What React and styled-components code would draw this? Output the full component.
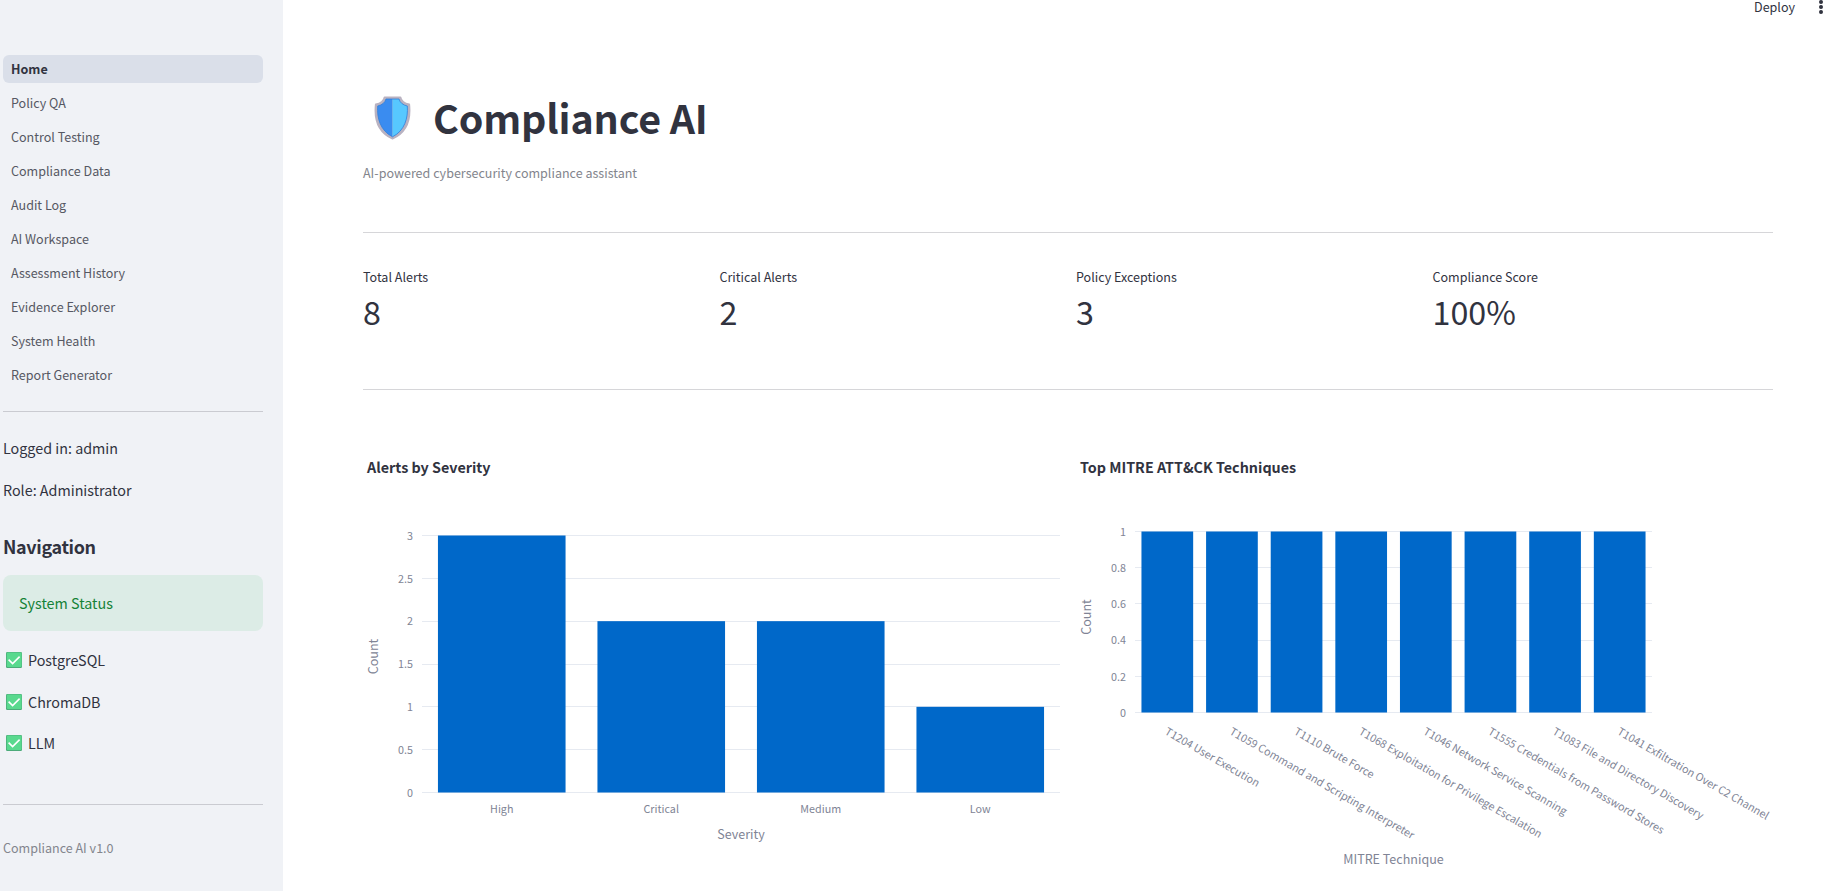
import React from 'react'
import styled, { createGlobalStyle } from 'styled-components'

const navItems = [
  'Home',
  'Policy QA',
  'Control Testing',
  'Compliance Data',
  'Audit Log',
  'AI Workspace',
  'Assessment History',
  'Evidence Explorer',
  'System Health',
  'Report Generator',
]

const services = ['PostgreSQL', 'ChromaDB', 'LLM']

const metrics = [
  { label: 'Total Alerts', value: '8' },
  { label: 'Critical Alerts', value: '2' },
  { label: 'Policy Exceptions', value: '3' },
  { label: 'Compliance Score', value: '100%' },
]

const severity = {
  bars: [
    { name: 'High', count: 3 },
    { name: 'Critical', count: 2 },
    { name: 'Medium', count: 2 },
    { name: 'Low', count: 1 },
  ],
  ticks: [0, 0.5, 1, 1.5, 2, 2.5, 3],
  plot: { left: 59, right: 697, top: 45.5, bottom: 302.5 },
  xTitle: { text: 'Severity', y: 349 },
  yTitle: { text: 'Count', y: 166.5 },
}

const techniques = {
  bars: [
    { name: 'T1204 User Execution', count: 1 },
    { name: 'T1059 Command and Scripting Interpreter', count: 1 },
    { name: 'T1110 Brute Force', count: 1 },
    { name: 'T1068 Exploitation for Privilege Escalation', count: 1 },
    { name: 'T1046 Network Service Scanning', count: 1 },
    { name: 'T1555 Credentials from Password Stores', count: 1 },
    { name: 'T1083 File and Directory Discovery', count: 1 },
    { name: 'T1041 Exfiltration Over C2 Channel', count: 1 },
  ],
  ticks: [0, 0.2, 0.4, 0.6, 0.8, 1],
  plot: { left: 59, right: 576, top: 41.5, bottom: 222.5 },
  xTitle: { text: 'MITRE Technique', y: 374 },
  yTitle: { text: 'Count', y: 127 },
  rotated: true,
}

const CheckIcon = () => (
  <svg width="16" height="16" viewBox="0 0 16 16">
    <rect width="16" height="16" rx="1.2" fill="#4cab7a" />
    <rect x="0.8" y="0.4" width="14.8" height="14.6" rx="1" fill="#59d98e" />
    <path d="M2.6 7.6 L6.6 11.6 L13.6 4.6" fill="none" stroke="#fff" strokeWidth="1.6" />
  </svg>
)

const ShieldIcon = () => (
  <svg width="37" height="44" viewBox="0 0 37 44">
    <path
      d="M10.5 1.2 H26.5 C27.2 5.2 30.2 7.6 35.3 8.4 C36.8 22.5 33 36.5 18.5 42.8 C4 36.5 0.2 22.5 1.7 8.4 C6.8 7.6 9.8 5.2 10.5 1.2 Z"
      fill="#b9b2c1"
      stroke="#b9b2c1"
      strokeWidth="1.6"
      strokeLinejoin="round"
    />
    <path d="M18.5 3 H12 C11 6.6 8.2 9 3.7 10 C2.8 22 6.2 34.6 18.5 40.8 Z" fill="#3a8cf0" />
    <path d="M18.5 3 H25 C26 6.6 28.8 9 33.3 10 C34.2 22 30.8 34.6 18.5 40.8 Z" fill="#57c8ff" />
    <path
      d="M12 3 H25 C26 6.6 28.8 9 33.3 10 C34.2 22 30.8 34.6 18.5 40.8 C6.2 34.6 2.8 22 3.7 10 C8.2 9 11 6.6 12 3 Z"
      fill="none"
      stroke="#2f7fdc"
      strokeWidth="0.8"
    />
  </svg>
)

const BarChart = ({ data, width, height }) => {
  const { bars, ticks, plot, xTitle, yTitle, rotated } = data
  const max = ticks[ticks.length - 1]
  const band = (plot.right - plot.left) / bars.length
  const barWidth = band * 0.8
  const y = (v) => plot.bottom - (v / max) * (plot.bottom - plot.top)
  const midX = (plot.left + plot.right) / 2

  return (
    <Chart width={width} height={height}>
      {ticks.map((t) => (
        <g key={t}>
          <GridLine x1={plot.left} x2={plot.right} y1={Math.floor(y(t)) + 0.5} y2={Math.floor(y(t)) + 0.5} />
          <TickText x={plot.left - 9} y={y(t) + 4.3} textAnchor="end">{t}</TickText>
        </g>
      ))}
      {bars.map((b, i) => {
        const center = plot.left + band * (i + 0.5)
        return (
          <g key={b.name}>
            <Bar x={center - barWidth / 2} y={y(b.count)} width={barWidth} height={plot.bottom - y(b.count)} />
            {rotated ? (
              <TickText transform={`translate(${center - 3.2} ${plot.bottom + 21.2}) rotate(30)`}>{b.name}</TickText>
            ) : (
              <TickText x={center} y={plot.bottom + 20.5} textAnchor="middle">{b.name}</TickText>
            )}
          </g>
        )
      })}
      <AxisTitle transform={`translate(15 ${yTitle.y}) rotate(-90)`} textAnchor="middle">{yTitle.text}</AxisTitle>
      <AxisTitle x={midX} y={xTitle.y} textAnchor="middle">{xTitle.text}</AxisTitle>
    </Chart>
  )
}

const App = () => {
  return (
    <Page>
      <GlobalStyle />
      <Sidebar>
        <Nav>
          {navItems.map((item, key) => (
            <NavItem key={item} $active={key === 0}>{item}</NavItem>
          ))}
        </Nav>
        <Divider $space="22px 0 23px" />
        <SideText>Logged in: admin</SideText>
        <SideText>Role: Administrator</SideText>
        <SideHeading>Navigation</SideHeading>
        <Status>System Status</Status>
        <ServiceList>
          {services.map((name) => (
            <Service key={name}>
              <CheckIcon />
              {name}
            </Service>
          ))}
        </ServiceList>
        <Divider $space="48px 0 32px" />
        <Version>Compliance AI v1.0</Version>
      </Sidebar>
      <Main>
        <Toolbar>
          <Deploy>Deploy</Deploy>
          <Dots>
            <i />
            <i />
            <i />
          </Dots>
        </Toolbar>
        <TitleRow>
          <ShieldIcon />
          <Title>Compliance AI</Title>
        </TitleRow>
        <Subtitle>AI-powered cybersecurity compliance assistant</Subtitle>
        <Divider $space="48px 0 34px" />
        <Metrics>
          {metrics.map((m) => (
            <div key={m.label}>
              <MetricLabel>{m.label}</MetricLabel>
              <MetricValue>{m.value}</MetricValue>
            </div>
          ))}
        </Metrics>
        <Divider $space="48px 0 64px" />
        <Charts>
          <div>
            <ChartTitle>Alerts by Severity</ChartTitle>
            <BarChart data={severity} width={697} height={380} />
          </div>
          <div>
            <ChartTitle>Top MITRE ATT&amp;CK Techniques</ChartTitle>
            <BarChart data={techniques} width={697} height={390} />
          </div>
        </Charts>
      </Main>
    </Page>
  )
}

const GlobalStyle = createGlobalStyle`
  * {
    box-sizing: border-box;
  }
  body {
    margin: 0;
    background: #fff;
    color: #31333f;
    font-family: "Noto Sans CJK SC", "Noto Sans", sans-serif;
    font-size: 14.33px;
  }
`

const Page = styled.div`
  display: flex;
  width: 100%;
  height: 891px;
  overflow: hidden;
`

const Sidebar = styled.aside`
  width: 283px;
  flex: none;
  padding: 55px 20px 0 3px;
  background: #f0f2f6;
`

const Nav = styled.nav`
  display: flex;
  flex-direction: column;
  gap: 6px;
`

const NavItem = styled.div`
  height: 28px;
  padding-left: 8px;
  line-height: 28px;
  border-radius: 6px;
  font-size: 12.54px;
  font-weight: ${(p) => (p.$active ? 700 : 400)};
  color: ${(p) => (p.$active ? '#31333f' : '#565863')};
  background: ${(p) => (p.$active ? '#dadfe9' : 'transparent')};
`

const Divider = styled.hr`
  height: 1px;
  margin: ${(p) => p.$space};
  border: 0;
  background: rgba(49, 51, 63, 0.2);
`

const SideText = styled.p`
  height: 26px;
  margin: 0 0 16px;
  line-height: 26px;
`

const SideHeading = styled.h3`
  height: 43px;
  margin: 0 0 13px;
  padding-top: 15px;
  line-height: 24px;
  font-size: 17.91px;
  font-weight: 600;
  letter-spacing: -0.32px;
`

const Status = styled.div`
  height: 56px;
  padding-left: 16px;
  line-height: 56px;
  border-radius: 8px;
  color: #158237;
  background: #dcece6;
`

const ServiceList = styled.div`
  display: flex;
  flex-direction: column;
  gap: 15.6px;
  margin-top: 16px;
`

const Service = styled.div`
  display: flex;
  align-items: center;
  gap: 6px;
  height: 26px;
  padding-left: 3px;
  line-height: 26px;
`

const Version = styled.div`
  line-height: 22px;
  font-size: 12.54px;
  color: #83858d;
`

const Main = styled.main`
  flex: 1;
  min-width: 0;
  padding: 0 61px 0 80px;
`

const Toolbar = styled.div`
  display: flex;
  justify-content: flex-end;
  gap: 24px;
  height: 84px;
  margin-right: -50px;
`

const Deploy = styled.div`
  height: 14px;
  line-height: 14px;
  font-size: 12.54px;
`

const Dots = styled.div`
  display: flex;
  flex-direction: column;
  gap: 1.4px;
  width: 4px;

  i {
    width: 3.8px;
    height: 3.8px;
    border-radius: 50%;
    background: #31333f;
  }
`

const TitleRow = styled.div`
  display: flex;
  align-items: center;
  gap: 22px;
  height: 68px;
  padding-left: 11px;
`

const Title = styled.h1`
  margin: -3px 0 0;
  line-height: 60px;
  font-size: 39.4px;
  font-weight: 700;
  letter-spacing: -0.13px;
`

const Subtitle = styled.p`
  height: 22px;
  margin: 10px 0 0;
  line-height: 22px;
  font-size: 12.54px;
  color: #83858d;
`

const Metrics = styled.div`
  display: grid;
  grid-template-columns: repeat(4, 1fr);
  column-gap: 16px;
`

const MetricLabel = styled.div`
  height: 20px;
  line-height: 20px;
  font-size: 12.54px;
`

const MetricValue = styled.div`
  height: 54px;
  line-height: 48px;
  font-size: 32.24px;
`

const Charts = styled.div`
  display: grid;
  grid-template-columns: repeat(2, minmax(0, 1fr));
  column-gap: 16px;
`

const ChartTitle = styled.h4`
  height: 36px;
  margin: 0;
  padding: 0 0 0 4px;
  line-height: 26px;
  font-size: 14.33px;
  font-weight: 700;
`

const Chart = styled.svg`
  display: block;
  overflow: visible;
`

const Bar = styled.rect`
  fill: #0068c9;
`

const GridLine = styled.line`
  stroke: #e6eaf1;
  stroke-width: 1;
`

const TickText = styled.text`
  fill: #808495;
  font-size: 10.75px;
`

const AxisTitle = styled.text`
  fill: #808495;
  font-size: 12.54px;
`

export default App
